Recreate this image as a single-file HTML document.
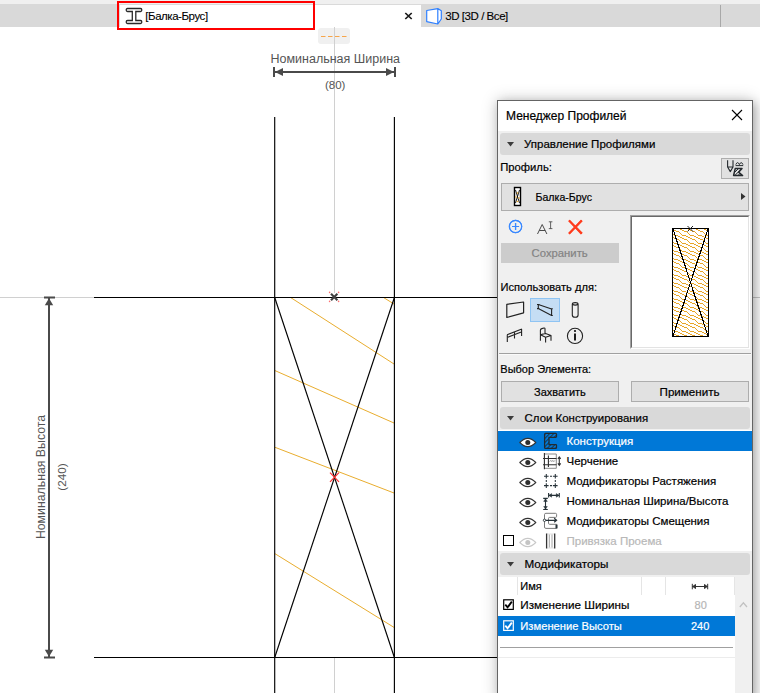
<!DOCTYPE html>
<html><head><meta charset="utf-8">
<style>
html,body{margin:0;padding:0;}
body{width:760px;height:693px;overflow:hidden;position:relative;background:#fff;font-family:"Liberation Sans",sans-serif;color:#000;}
.a{position:absolute;}
.t{position:absolute;white-space:nowrap;font-size:11.5px;line-height:14px;-webkit-text-stroke:0.2px currentColor;}
svg{position:absolute;left:0;top:0;}
</style></head><body>

<!-- canvas drawing -->
<svg width="760" height="693" viewBox="0 0 760 693" style="shape-rendering:auto">
  <!-- grey guide lines -->
  <line x1="334.5" y1="27" x2="334.5" y2="293" stroke="#d0d0d0" stroke-width="1"/>
  <line x1="334.5" y1="658" x2="334.5" y2="693" stroke="#d0d0d0" stroke-width="1"/>
  <line x1="0" y1="297.5" x2="94" y2="297.5" stroke="#d0d0d0" stroke-width="1"/>
  <line x1="752" y1="297.5" x2="760" y2="297.5" stroke="#c8c8c8" stroke-width="1"/>
  <rect x="318" y="28" width="32" height="16" rx="3" fill="#f0f0f0"/>
  <line x1="334.5" y1="27" x2="334.5" y2="44" stroke="#d0d0d0" stroke-width="1"/>
  <line x1="321" y1="36.5" x2="347" y2="36.5" stroke="#f7a54a" stroke-width="1" stroke-dasharray="4.5,2.5"/>
  <!-- orange hatch -->
  <g stroke="#e9ad2e" stroke-width="1" fill="none">
    <line x1="290.6" y1="297.5" x2="394" y2="364"/>
    <line x1="383.5" y1="297.5" x2="394" y2="304"/>
    <line x1="275" y1="370.6" x2="394" y2="423"/>
    <line x1="275" y1="447.3" x2="394" y2="493"/>
    <line x1="275" y1="553.7" x2="394" y2="627.4"/>
  </g>
  <!-- main black lines -->
  <g stroke="#000" stroke-width="1.15">
    <line x1="274.7" y1="117" x2="274.7" y2="693"/>
    <line x1="394.4" y1="117" x2="394.4" y2="693"/>
    <line x1="94" y1="297.5" x2="497" y2="297.5"/>
    <line x1="94" y1="657.5" x2="497" y2="657.5"/>
    
    <line x1="274.7" y1="297.5" x2="394.4" y2="657.5"/>
    <line x1="394.4" y1="297.5" x2="274.7" y2="657.5"/>
  </g>
  <!-- markers -->
  <g stroke="#ff3030" stroke-width="1.2">
    <line x1="330" y1="472.6" x2="339" y2="481.8"/>
    <line x1="339" y1="472.6" x2="330" y2="481.8"/>
  </g>
  <g fill="#ff7070">
    <circle cx="329.6" cy="292.4" r="0.8"/><circle cx="338.6" cy="292.4" r="0.8"/>
    <circle cx="329.6" cy="301.4" r="0.8"/><circle cx="338.6" cy="301.4" r="0.8"/>
  </g>
  <g stroke="#3f3f3f" stroke-width="2.1">
    <line x1="331" y1="293.8" x2="337.4" y2="300.2"/>
    <line x1="337.4" y1="293.8" x2="331" y2="300.2"/>
  </g>
  <!-- top dimension -->
  <g fill="#4a4a4a" stroke="none">
    <rect x="274" y="71" width="121" height="2"/>
    <rect x="273" y="67" width="2" height="10"/>
    <rect x="394" y="67" width="2" height="10"/>
    <path d="M275 72 L283 68 L283 76 Z"/>
    <path d="M394 72 L386 68 L386 76 Z"/>
  </g>
  <!-- left dimension -->
  <g fill="#4a4a4a" stroke="none">
    <rect x="48" y="297" width="2" height="361"/>
    <rect x="44" y="296.5" width="11" height="2"/>
    <rect x="44" y="656.5" width="11" height="2"/>
    <path d="M49 298.2 L44.8 305.2 L53.2 305.2 Z"/>
    <path d="M49 656.8 L44.8 649.8 L53.2 649.8 Z"/>
  </g>
</svg>
<div class="t" style="left:270.5px;top:52px;font-size:12.5px;color:#555;-webkit-text-stroke:0;">Номинальная Ширина</div>
<div class="t" style="left:325px;top:78px;font-size:11.5px;color:#555;-webkit-text-stroke:0;">(80)</div>
<div class="t" style="left:-21.7px;top:470px;font-size:12.3px;color:#555;-webkit-text-stroke:0;transform:rotate(-90deg);transform-origin:center;width:126px;text-align:center;">Номинальная Высота</div>
<div class="t" style="left:-1.3px;top:470px;font-size:11.7px;color:#555;-webkit-text-stroke:0;transform:rotate(-90deg);transform-origin:center;width:126px;text-align:center;">(240)</div>

<!-- tab bar -->
<div class="a" style="left:0;top:0;width:760px;height:4px;background:#f0f0f0"></div>
<div class="a" style="left:0;top:4px;width:760px;height:23px;background:#d9d9d9"></div>
<div class="a" style="left:120px;top:4px;width:301px;height:23px;background:#fff"></div>
<div class="a" style="left:720px;top:5px;width:1px;height:22px;background:#a8a8a8"></div>
<div class="a" style="left:120px;top:4px;width:301px;height:1px;background:#dadada"></div>
<div class="a" style="left:116.6px;top:0.8px;width:194.4px;height:24.9px;border:2.2px solid #f00"></div>
<div class="t" style="left:145.3px;top:9.3px;font-size:11.5px;letter-spacing:-0.45px;-webkit-text-stroke:0.1px #000;">[Балка-Брус]</div>
<div class="t" style="left:445.3px;top:9.3px;font-size:11.5px;letter-spacing:-0.45px;-webkit-text-stroke:0.1px #000;">3D [3D / Все]</div>

<!-- panel -->
<div class="a" style="left:497px;top:100px;width:254px;height:600px;border:1px solid #646464;background:#f0f0f0;box-shadow:0 0 15px rgba(0,0,0,0.22), 3px 3px 9px rgba(0,0,0,0.22)"></div>
<div class="a" style="left:498px;top:101px;width:254px;height:30px;background:#fff"></div>
<div class="t" style="left:506px;top:109px;font-size:12px;">Менеджер Профилей</div>
<svg class="a" style="left:730px;top:108px" width="14" height="14"><path d="M2 2 L12 12 M12 2 L2 12" stroke="#000" stroke-width="1.1"/></svg>

<!-- section 1 header -->
<div class="a" style="left:500px;top:133px;width:250px;height:21.5px;background:#d9d9d9;border-radius:3px"></div>
<svg class="a" style="left:506px;top:141px" width="10" height="7"><path d="M1 1 L8 1 L4.5 5.5 Z" fill="#3c3c3c"/></svg>
<div class="t" style="left:524px;top:137px;">Управление Профилями</div>

<div class="t" style="left:500.2px;top:160px;font-size:11.25px;">Профиль:</div>
<div class="a" style="left:721px;top:158px;width:26px;height:19px;background:#e1e1e1;border:1px solid #adadad"></div>

<!-- dropdown -->
<div class="a" style="left:501px;top:183px;width:246px;height:26px;background:#e1e1e1;border:1px solid #adadad"></div>
<div class="a" style="left:514px;top:187px;width:5px;height:17px;border:1px solid #000;background:#f0c070"></div>
<div class="t" style="left:535.5px;top:190px;font-size:10.6px;">Балка-Брус</div>
<svg class="a" style="left:740px;top:192px" width="7" height="9"><path d="M1 1 L5.5 4.5 L1 8 Z" fill="#333"/></svg>

<!-- icons row -->
<svg class="a" style="left:508px;top:219px" width="16" height="16"><circle cx="7.5" cy="7.5" r="6.2" fill="none" stroke="#3a8bff" stroke-width="1.2"/><path d="M7.5 4 V11 M4 7.5 H11" stroke="#3a8bff" stroke-width="1.2"/></svg>
<svg class="a" style="left:567px;top:219px" width="17" height="17"><path d="M2 1.5 L15 14.5 M15 1.5 L2 14.5" stroke="#ff3b1a" stroke-width="2"/></svg>

<div class="a" style="left:501px;top:242.5px;width:118px;height:20px;background:#cccccc"></div>
<div class="t" style="left:531.6px;top:245.5px;font-size:11.3px;color:#838383;">Сохранить</div>

<!-- preview -->
<div class="a" style="left:630px;top:215px;width:118px;height:132px;border-top:1px solid #a0a0a0;border-left:1px solid #a0a0a0;border-right:1px solid #fff;border-bottom:1px solid #fff"></div>
<div class="a" style="left:631px;top:216px;width:116px;height:130px;background:#fff;border-top:1px solid #696969;border-left:1px solid #696969;border-right:1px solid #e3e3e3;border-bottom:1px solid #e3e3e3"></div>

<div class="t" style="left:500.5px;top:280px;font-size:11.1px;">Использовать для:</div>
<div class="a" style="left:530px;top:298px;width:28px;height:22px;background:#c5ddf4;border:1px solid #8fc4f3"></div>

<div class="a" style="left:499px;top:353px;width:252px;height:1px;background:#a0a0a0"></div>
<div class="a" style="left:499px;top:354px;width:252px;height:1px;background:#fafafa"></div>

<div class="t" style="left:500.3px;top:362px;font-size:11px;">Выбор Элемента:</div>
<div class="a" style="left:501px;top:381px;width:116px;height:19px;background:#e1e1e1;border:1px solid #adadad"></div>
<div class="t" style="left:534px;top:385px;font-size:11px;">Захватить</div>
<div class="a" style="left:631px;top:381px;width:116px;height:19px;background:#e1e1e1;border:1px solid #adadad"></div>
<div class="t" style="left:659.6px;top:385px;font-size:11.6px;">Применить</div>

<!-- section 2 header -->
<div class="a" style="left:500px;top:407px;width:250px;height:22px;background:#d9d9d9;border-radius:3px"></div>
<svg class="a" style="left:506px;top:415px" width="10" height="7"><path d="M1 1 L8 1 L4.5 5.5 Z" fill="#3c3c3c"/></svg>
<div class="t" style="left:524.6px;top:411px;font-size:11.45px;">Слои Конструирования</div>

<!-- layers list -->
<div class="a" style="left:498px;top:429.5px;width:254px;height:121.5px;background:#fff"></div>
<div class="a" style="left:498px;top:431px;width:254px;height:20px;background:#0078d7"></div>
<div class="t" style="left:566.5px;top:434.3px;color:#fff;">Конструкция</div>
<div class="t" style="left:566.5px;top:454.3px;">Черчение</div>
<div class="t" style="left:566.5px;top:474.3px;">Модификаторы Растяжения</div>
<div class="t" style="left:566.5px;top:494.3px;">Номинальная Ширина/Высота</div>
<div class="t" style="left:566.5px;top:514.3px;">Модификаторы Смещения</div>
<div class="t" style="left:566.5px;top:534.3px;color:#b8b8b8;">Привязка Проема</div>
<div class="a" style="left:503px;top:535px;width:9px;height:9px;border:1.2px solid #000;background:#fff"></div>

<!-- section 3 header -->
<div class="a" style="left:500px;top:553px;width:250px;height:21.5px;background:#d9d9d9;border-radius:3px"></div>
<svg class="a" style="left:506px;top:561px" width="10" height="7"><path d="M1 1 L8 1 L4.5 5.5 Z" fill="#3c3c3c"/></svg>
<div class="t" style="left:524.5px;top:557px;font-size:11.7px;">Модификаторы</div>

<!-- modifiers table -->
<div class="a" style="left:498px;top:576.5px;width:237px;height:120px;background:#fff"></div>
<div class="a" style="left:517px;top:577px;width:1px;height:18px;background:#e5e5e5"></div>
<div class="a" style="left:640.5px;top:577px;width:1px;height:18px;background:#e5e5e5"></div>
<div class="a" style="left:664.5px;top:577px;width:1px;height:18px;background:#e5e5e5"></div>
<div class="a" style="left:734px;top:577px;width:1px;height:18px;background:#e5e5e5"></div>
<div class="t" style="left:520.3px;top:579px;font-size:11px;">Имя</div>
<div class="a" style="left:498px;top:616px;width:237px;height:20px;background:#0078d7"></div>
<div class="t" style="left:520.3px;top:598px;font-size:11.7px;">Изменение Ширины</div>
<div class="t" style="left:520.3px;top:619px;font-size:11.2px;color:#fff;">Изменение Высоты</div>
<div class="t" style="left:694.6px;top:598px;font-size:11px;color:#b5b5b5;">80</div>
<div class="t" style="left:691px;top:619px;font-size:11px;color:#fff;">240</div>
<div class="a" style="left:500px;top:647px;width:233px;height:1px;background:#a0a0a0"></div>
<div class="a" style="left:498px;top:657px;width:237px;height:1px;background:#ececec"></div>

<!-- panel icons overlay -->
<svg width="760" height="693" viewBox="0 0 760 693" style="position:absolute;left:0;top:0">
 <defs>
  <pattern id="wood" patternUnits="userSpaceOnUse" width="16" height="8" x="688" y="301"><g fill="#e8a628" shape-rendering="crispEdges"><rect x="0" y="0" width="2" height="1"/><rect x="8" y="0" width="2" height="1"/><rect x="2" y="1" width="2" height="1"/><rect x="10" y="1" width="2" height="1"/><rect x="4" y="2" width="3" height="1"/><rect x="12" y="2" width="3" height="1"/><rect x="7" y="3" width="1" height="1"/><rect x="15" y="3" width="1" height="1"/><rect x="0" y="4" width="1" height="1"/><rect x="8" y="4" width="1" height="1"/><rect x="1" y="5" width="1" height="1"/><rect x="9" y="5" width="1" height="1"/><rect x="2" y="6" width="4" height="1"/><rect x="10" y="6" width="4" height="1"/><rect x="6" y="7" width="2" height="1"/><rect x="14" y="7" width="2" height="1"/></g></pattern>
  <pattern id="hatch" patternUnits="userSpaceOnUse" width="2.9" height="2.9" x="544" y="433" patternTransform="rotate(45)">
   <line x1="0.5" y1="0" x2="0.5" y2="2.9" stroke="#222a30" stroke-width="0.85"/>
  </pattern>
 </defs>
 <!-- tab I-beam -->
 <path d="M127.5 8.5 H140.5 Q141.8 8.5 141.8 10 Q141.8 11.5 140.5 11.5 H135.8 V20.5 H140.5 Q141.8 20.5 141.8 22 Q141.8 23.5 140.5 23.5 H127.5 Q126.2 23.5 126.2 22 Q126.2 20.5 127.5 20.5 H132.3 V11.5 H127.5 Q126.2 11.5 126.2 10 Q126.2 8.5 127.5 8.5 Z" fill="none" stroke="#2a2a2a" stroke-width="1.3"/>
 <!-- tab close x -->
 <path d="M405.3 13 L411.7 19 M411.7 13 L405.3 19" stroke="#1a1a1a" stroke-width="1.7"/>
 <!-- 3D icon -->
 <path d="M426.7 10.5 L437.8 8.6 L441.3 10.8 V19 L437.8 24 L426.7 21.6 Z M437.8 8.6 V24" fill="#fff" stroke="#2f80ff" stroke-width="1.2" stroke-linejoin="round"/>

 <!-- small button icon -->
 <path d="M727.6 160.2 V167 H733 V160.2 M727.6 167 L730.3 171.6 L733 167" fill="none" stroke="#252a2e" stroke-width="1.1" stroke-linejoin="round"/>
 <path d="M735.8 164.6 Q737.6 160.6 739.4 164.6 M739.4 164.6 Q741.2 160.6 743 164.6 M735.6 165.6 H743.2" fill="none" stroke="#252a2e" stroke-width="1"/>
 <clipPath id="tri"><path d="M735.2 168.6 H742 L738.6 172.2 L742.6 175.5 H733.6 Z"/></clipPath>
 <g clip-path="url(#tri)" stroke="#252a2e" stroke-width="1"><path d="M731 176 L739 168 M733.8 176.5 L741.8 168.5 M736.5 177 L744.5 169"/></g>
 <path d="M735.2 168.6 H742 L738.6 172.2 L742.6 175.5 H733.6 Z" fill="none" stroke="#252a2e" stroke-width="1.5" stroke-linejoin="round"/>
 <!-- profile dropdown icon -->
 <rect x="514.5" y="187.5" width="6" height="18" fill="#fff" stroke="#000" stroke-width="1.4"/>
 <path d="M515.5 190 L519.5 203 M519.5 190 L515.5 203" stroke="#000" stroke-width="0.9"/>
 <circle cx="517.5" cy="193" r="0.8" fill="#eeab2a"/><circle cx="516" cy="197" r="0.8" fill="#eeab2a"/><circle cx="519" cy="198" r="0.8" fill="#eeab2a"/><circle cx="517.5" cy="201.5" r="0.8" fill="#eeab2a"/>

 <!-- add / rename / delete -->
 <circle cx="515.6" cy="226.5" r="6.1" fill="none" stroke="#3a88ff" stroke-width="1.1"/>
 <path d="M515.6 223 V230 M512.1 226.5 H519.1" stroke="#3a88ff" stroke-width="1.2"/>
 <path d="M537.5 234 L542.2 224.5 L546.9 234 M539.2 230.5 H545.2" fill="none" stroke="#4a4a4a" stroke-width="1"/>
 <path d="M548.8 221.8 H552.4 M550.6 221.8 V228.6 M548.8 228.6 H552.4" fill="none" stroke="#3d3d3d" stroke-width="0.8"/>
 <path d="M569 220.3 L581.5 233.8 M581.5 220.3 L569 233.8" stroke="#ff3c1e" stroke-width="1.9"/>

 <!-- preview -->
 <rect x="672.5" y="228.5" width="36" height="108" fill="url(#wood)" stroke="#000" stroke-width="1.3" shape-rendering="crispEdges"/>
 <path d="M673 229 L708 336 M708 229 L673 336" stroke="#000" stroke-width="1.15" shape-rendering="crispEdges"/>
 <path d="M687.5 226 L693 231.5 M693 226 L687.5 231.5" stroke="#222" stroke-width="1"/>

 <!-- use for icons -->
 <path d="M506.8 304.3 L523.6 302 V312.8 L506.8 317.5 Z" fill="none" stroke="#222" stroke-width="1.2" stroke-linejoin="round"/>
 <path d="M538.3 304.6 L551.6 308.9 M538.3 308.6 L551.6 315.5 M538.3 304.6 V308.6 M551.6 308.9 V315.5 M537 304.5 H539.6 M537 308.6 H539.6 M550.4 308.8 H552.8 M550.4 315.5 H552.8" fill="none" stroke="#222" stroke-width="1.1"/>
 <path d="M572.3 304.3 Q572.3 302.6 575.2 302.6 Q578.1 302.6 578.1 304.3 V315 Q578.1 317.3 575.2 317.3 Q572.3 317.3 572.3 315 Z M572.3 304.3 Q575.2 306 578.1 304.3" fill="none" stroke="#222" stroke-width="1.1"/>
 <path d="M507.1 334.8 L521.9 328.9 M507.1 337.4 L521.9 331.8 M507.3 334.8 V342 M514.5 332 V338.6 M521.6 328.9 V336" fill="none" stroke="#222" stroke-width="1.1"/>
 <path d="M540.4 340.8 V330.3 Q540.4 329 541.8 328.6 L544 328 Q545 327.8 545 328.8 V333.8 M540.4 334.8 L545.6 333.4 L551 335.4 L545.6 337.2 Z M545.6 337.2 V342.6 M551 335.4 V340.8" fill="none" stroke="#222" stroke-width="1.1" stroke-linejoin="round"/>
 <circle cx="575" cy="335.9" r="7.6" fill="none" stroke="#222" stroke-width="1.1"/>
 <path d="M575 333.5 V340.5" stroke="#111" stroke-width="1.9"/><circle cx="575" cy="331" r="1.1" fill="#111"/>

 <!-- list eyes -->
 <g>
  <path d="M519.8 442.5 Q527.8 434.3 535.8 442.5 Q527.8 450.7 519.8 442.5 Z" fill="#fff" stroke="#333" stroke-width="1.1" stroke-linejoin="round"/>
  <circle cx="527.8" cy="442.5" r="2.5" fill="#2d2d2d"/>
  <path d="M519.8 462.5 Q527.8 454.3 535.8 462.5 Q527.8 470.7 519.8 462.5 Z" fill="#fff" stroke="#333" stroke-width="1.1" stroke-linejoin="round"/>
  <circle cx="527.8" cy="462.5" r="2.5" fill="#2d2d2d"/>
  <path d="M519.8 482.5 Q527.8 474.3 535.8 482.5 Q527.8 490.7 519.8 482.5 Z" fill="#fff" stroke="#333" stroke-width="1.1" stroke-linejoin="round"/>
  <circle cx="527.8" cy="482.5" r="2.5" fill="#2d2d2d"/>
  <path d="M519.8 502.5 Q527.8 494.3 535.8 502.5 Q527.8 510.7 519.8 502.5 Z" fill="#fff" stroke="#333" stroke-width="1.1" stroke-linejoin="round"/>
  <circle cx="527.8" cy="502.5" r="2.5" fill="#2d2d2d"/>
  <path d="M519.8 522.5 Q527.8 514.3 535.8 522.5 Q527.8 530.7 519.8 522.5 Z" fill="#fff" stroke="#333" stroke-width="1.1" stroke-linejoin="round"/>
  <circle cx="527.8" cy="522.5" r="2.5" fill="#2d2d2d"/>
  <path d="M519.8 542.5 Q527.8 534.3 535.8 542.5 Q527.8 550.7 519.8 542.5 Z" fill="#fff" stroke="#c8c8c8" stroke-width="1.1" stroke-linejoin="round"/>
  <circle cx="527.8" cy="542.5" r="2.5" fill="#c4c4c4"/>
 </g>
 <!-- row1 C icon -->
 <path d="M545.5 433.4 H555.6 Q556.5 433.4 556.5 434.3 V436.6 Q556.5 437.4 555.7 437.4 H549 V444.5 H555.7 Q556.5 444.5 556.5 445.3 V447.5 Q556.5 448.4 555.6 448.4 H545.5 Q544.6 448.4 544.6 447.5 V434.3 Q544.6 433.4 545.5 433.4 Z" fill="url(#hatch)" stroke="#222a30" stroke-width="1.25"/>
 <!-- row2 drafting -->
 <path d="M544.4 454 H556.3 V468.3 H544.4" fill="none" stroke="#8a8a8a" stroke-width="1"/>
 <path d="M543 458.5 H556.5 M543 464.7 H556.5 M544.4 453 V469.3 M548.4 455.5 V467" fill="none" stroke="#2f2f2f" stroke-width="1.1"/>
 <path d="M549.8 461.5 L550.8 460.5 L551.8 461.5 L552.8 460.5 L553.8 461.5 L554.8 460.5" fill="none" stroke="#555" stroke-width="0.7"/>
 <path d="M559.3 457.5 V464.8 M557.9 458.9 L559.3 457 L560.7 458.9 M557.9 463.4 L559.3 465.3 L560.7 463.4" fill="none" stroke="#333" stroke-width="1.1"/>
 <!-- row3 dashed rect -->
 <g stroke="#263238" stroke-width="1.05">
  <path d="M544 476.3 H548.6 M546.3 474 V478.6 M553 476.3 H557.6 M555.3 474 V478.6 M544 485.6 H548.6 M546.3 483.3 V487.9 M553 485.6 H557.6 M555.3 483.3 V487.9"/>
  <path d="M550 476.3 H552.1 M550 485.6 H552.1 M546.3 480 V482 M555.3 480 V482"/>
 </g>
 <!-- row4 dims -->
 <g stroke="#263238" stroke-width="1.1" fill="#263238">
  <path d="M548.6 493 V497.6 M559.3 493 V497.6 M548.6 495.4 H559.3" fill="none"/>
  <path d="M549 495.4 L551.6 493.6 V497.2 Z M558.9 495.4 L556.3 493.6 V497.2 Z" stroke-width="0.5"/>
  <path d="M543.2 498.4 H547.8 M543.2 509.5 H547.8 M545.5 498.4 V509.5" fill="none"/>
  <path d="M545.5 498.8 L543.7 501.4 H547.3 Z M545.5 509.1 L543.7 506.5 H547.3 Z" stroke-width="0.5"/>
 </g>
 <!-- row5 offset -->
 <path d="M545.9 513.3 H555.4 Q556.6 513.3 556.6 514.5 V516.3 Q556.6 517.4 555.5 517.4 H549.6 Q548.5 517.4 548.5 518.5 V523.2 Q548.5 524.3 549.6 524.3 H556.6 V528.4 H545.9 Q544.5 528.4 544.5 527 V514.7 Q544.5 513.3 545.9 513.3 Z" fill="none" stroke="#7a7a7a" stroke-width="1"/>
 <path d="M556.5 524.6 V528.4" stroke="#263238" stroke-width="2"/>
 <path d="M545.5 520.3 H556.5 M554.2 518.3 L556.6 520.3 L554.2 522.3" fill="none" stroke="#263238" stroke-width="1.2"/>
 <circle cx="544.5" cy="520.3" r="1.2" fill="#fff" stroke="#263238" stroke-width="0.9"/>
 <!-- row6 column -->
 <path d="M546.6 533.5 V548.5 M554.7 533.5 V548.5" fill="none" stroke="#333" stroke-width="1.3"/>
 <path d="M549.3 534.5 V547.5 M552 534.5 V547.5" fill="none" stroke="#9a9a9a" stroke-width="0.9"/>
 <path d="M547.5 534 H554 M547.5 548 H554" fill="none" stroke="#aaa" stroke-width="0.7" stroke-dasharray="1,1"/>

 <!-- table checkboxes -->
 <rect x="503.7" y="599.8" width="9.6" height="9.6" fill="#fff" stroke="#000" stroke-width="1.2"/>
 <path d="M505.3 604.6 L507.6 607.4 L511.8 601.6" fill="none" stroke="#000" stroke-width="1.8"/>
 <rect x="503.7" y="620.8" width="9.6" height="9.6" fill="none" stroke="#fff" stroke-width="1.2"/>
 <path d="M505.3 625.6 L507.6 628.4 L511.8 622.6" fill="none" stroke="#fff" stroke-width="1.8"/>
 <!-- width icon -->
 <path d="M692.3 583.8 V589.3 M707.7 583.8 V589.3 M692.3 586.5 H707.7 M695.5 584.5 L692.8 586.5 L695.5 588.5 Z M704.5 584.5 L707.2 586.5 L704.5 588.5 Z" fill="#333" stroke="#333" stroke-width="1"/>
 <!-- scrollbar up arrow -->
 <path d="M739.8 607 L743.4 602.8 L747 607" fill="none" stroke="#c2c2c2" stroke-width="1.3"/>
</svg>
</body></html>
